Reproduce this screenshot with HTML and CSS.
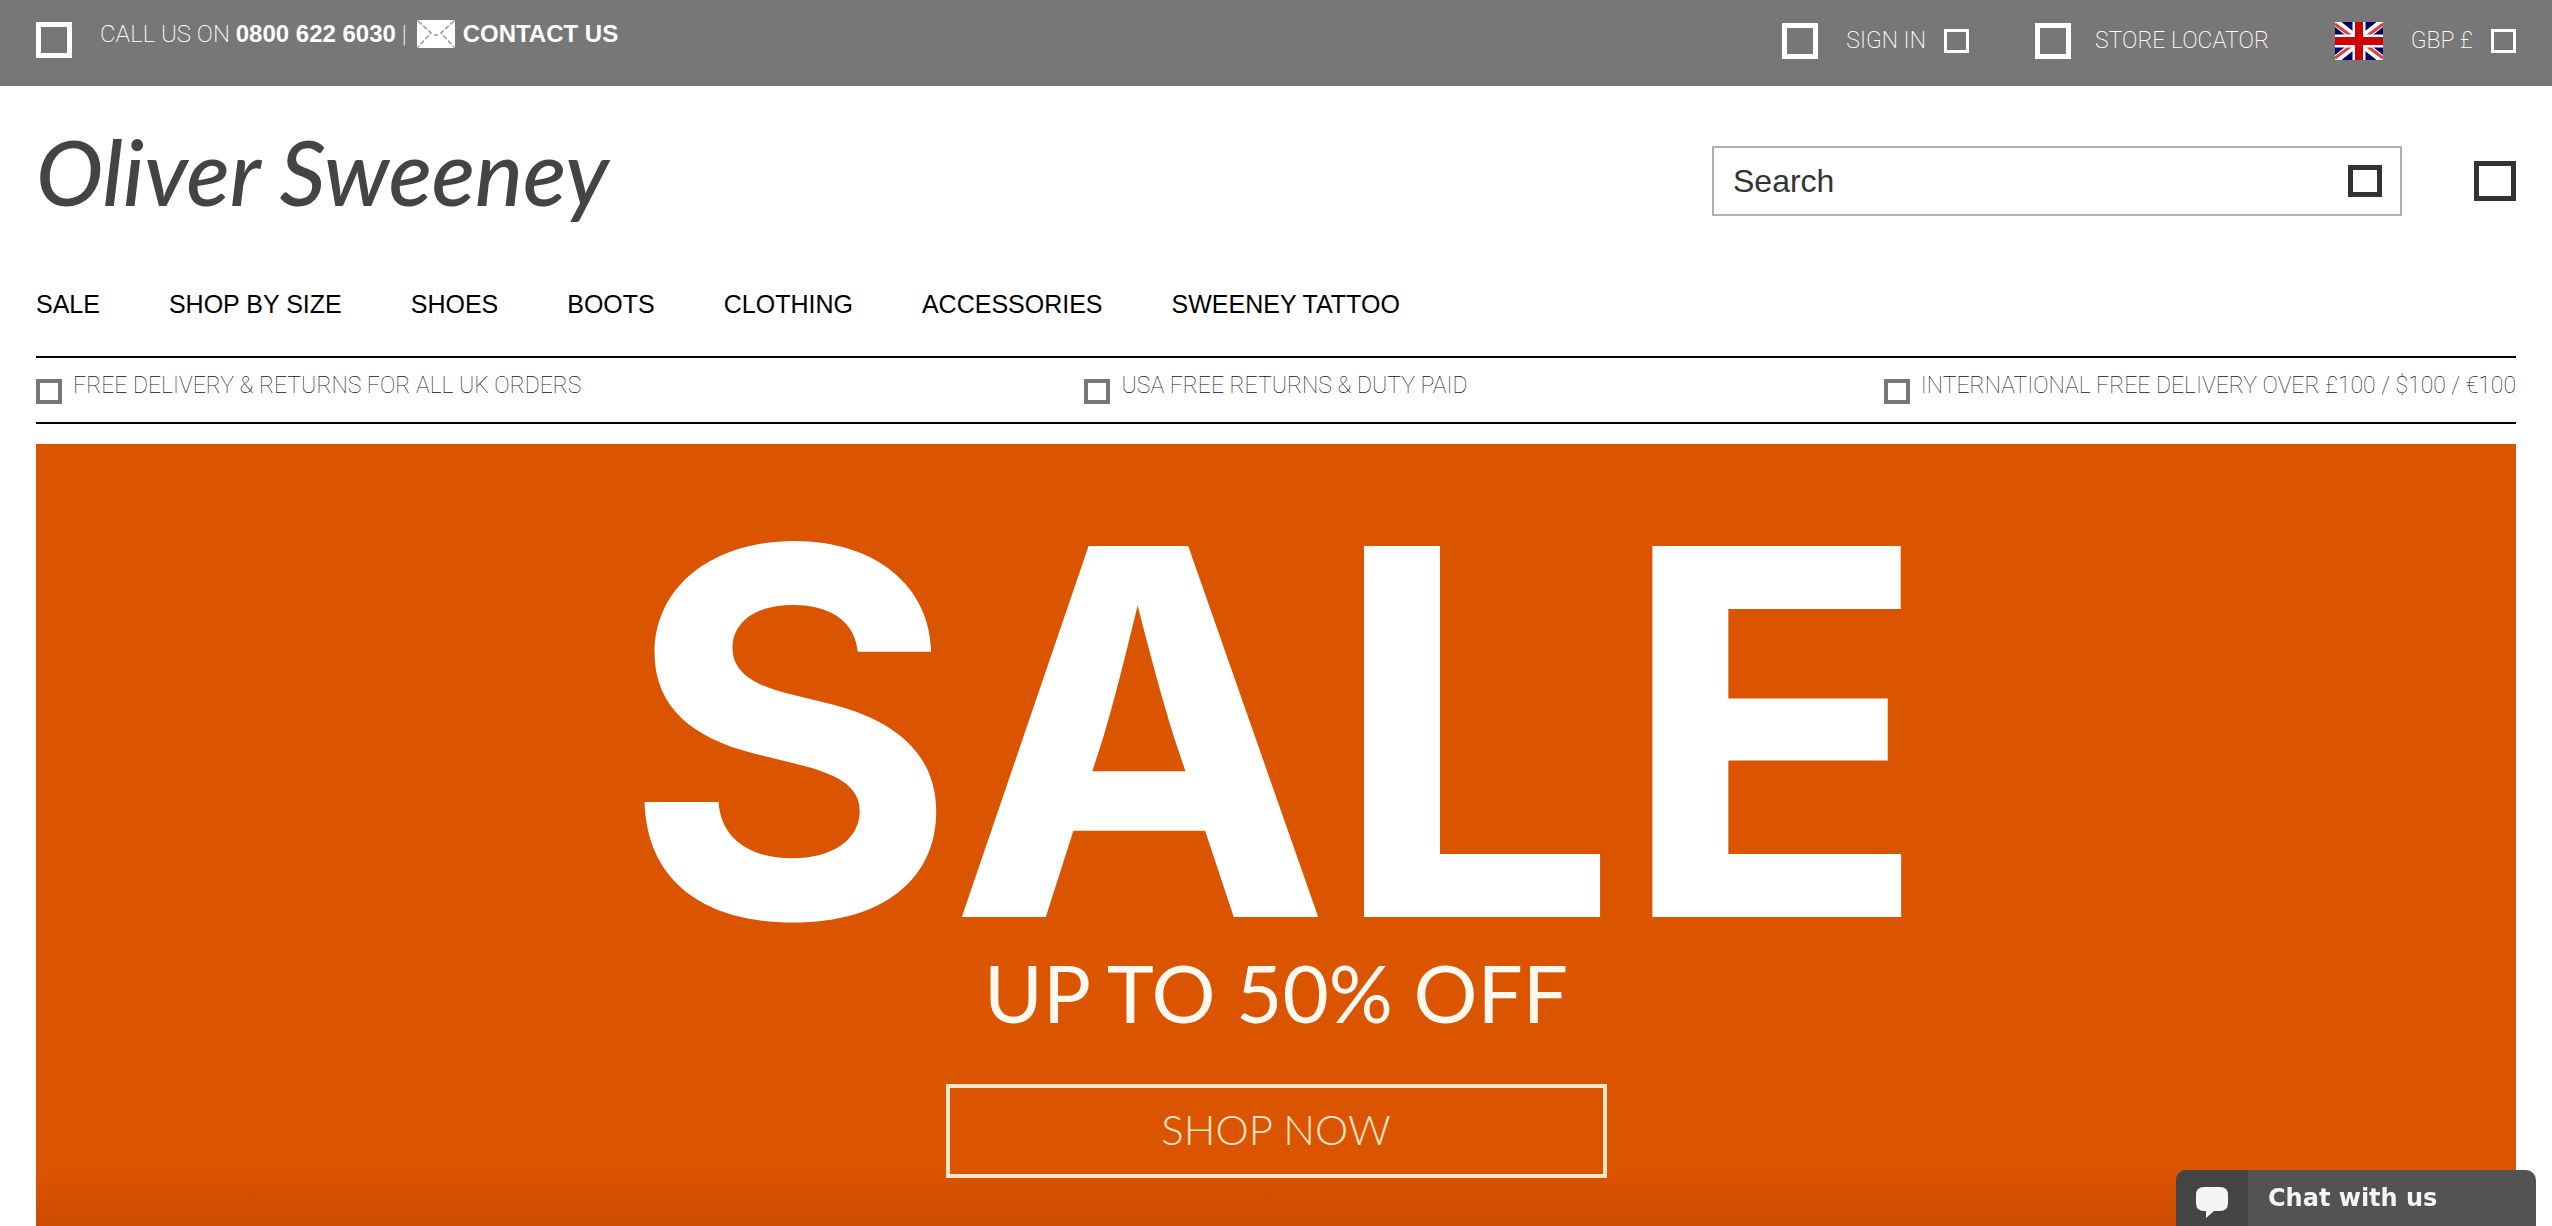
FILE: index.html
```
<!DOCTYPE html>
<html lang="en">
<head>
  <meta charset="utf-8">
  <meta name="viewport" content="width=device-width, initial-scale=1">
  <title>Oliver Sweeney</title>
  <link rel="stylesheet" href="styles.css">
</head>

<body>
  <div id="top-bar">
    <div class="contact">
      <span class="icon icon-large"></span>
      <p>CALL US ON <a href="tel:08006226030">0800 622 6030</a> |</p>
      <a class="mail" href="#contact">
        <svg width="38" height="28" viewBox="0 0 38 28">
          <rect width="38" height="28" rx="2" fill="#fff"/>
          <path d="M1 1l13 12L1 27M37 1L24 13l13 14M17 15h4" fill="none" stroke="#999" stroke-width="1.5" stroke-dasharray="5 2"/>
        </svg>
        CONTACT US
      </a>
    </div>
    <div class="account">
      <button type="button" class="sign-in"><span class="icon icon-large"></span>SIGN IN<span class="icon icon-small"></span></button>
      <a class="stores" href="#stores"><span class="icon icon-large"></span>STORE LOCATOR</a>
      <button type="button" class="currency">
        <svg width="48" height="38" viewBox="0 0 48 38">
          <rect width="48" height="38" fill="#006"/>
          <path d="M0 0l48 38M48 0L0 38" stroke="#fff" stroke-width="8"/>
          <path d="M0 2l20 15M48 2L28 17M0 36l20-15M48 36L28 21" stroke="#e0403c" stroke-width="3"/>
          <path d="M24 0v38M0 19h48" stroke="#fff" stroke-width="13"/>
          <path d="M24 0v38M0 19h48" stroke="#d00000" stroke-width="8"/>
        </svg>
        GBP £<span class="icon icon-small"></span>
      </button>
    </div>
  </div>

  <header>
    <a class="logo" href="#home">
      <svg width="576" height="130" viewBox="0 0 576 130">
        <text x="0" y="90">Oliver Sweeney</text>
      </svg>
    </a>
    <form class="search">
      <input type="text" placeholder="Search" aria-label="Search">
      <button type="submit" aria-label="Go"><span class="icon icon-search"></span></button>
    </form>
    <a class="bag" href="#bag" aria-label="Bag"><span class="icon icon-bag"></span></a>
  </header>

  <nav>
    <a href="#sale">SALE</a>
    <a href="#size">SHOP BY SIZE</a>
    <a href="#shoes">SHOES</a>
    <a href="#boots">BOOTS</a>
    <a href="#clothing">CLOTHING</a>
    <a href="#accessories">ACCESSORIES</a>
    <a href="#tattoo">SWEENEY TATTOO</a>
  </nav>

  <ul id="delivery">
    <li><span class="icon icon-tick"></span>FREE DELIVERY &amp; RETURNS FOR ALL UK ORDERS</li>
    <li><span class="icon icon-tick"></span>USA FREE RETURNS &amp; DUTY PAID</li>
    <li><span class="icon icon-tick"></span>INTERNATIONAL FREE DELIVERY OVER £100 / $100 / €100</li>
  </ul>

  <main id="banner">
    <h1>SALE</h1>
    <h2>UP TO 50% OFF</h2>
    <a class="shop-now" href="#sale">SHOP NOW</a>
  </main>

  <button type="button" id="chat">
    <span class="bubble">
      <svg width="32" height="31" viewBox="0 0 32 31">
        <path d="M8 0h16q8 0 8 8v8q0 8-8 8h-6l-8 7v-7H8q-8 0-8-8V8q0-8 8-8z" fill="#f5f5f5"/>
      </svg>
    </span>
    <span class="chat-text">Chat with us</span>
  </button>
</body>
</html>
```
FILE: styles.css
```
* {
  box-sizing: border-box;
}

body {
  margin: 0;
  min-height: 100vh;
  display: flex;
  flex-direction: column;
  background: #fff;
  font-family: "Liberation Sans", Arial, sans-serif;
}

a {
  color: inherit;
  text-decoration: none;
}

button {
  padding: 0;
  border: 0;
  background: none;
  color: inherit;
  font: inherit;
  cursor: pointer;
}

/* Empty square icons */
.icon {
  display: block;
  flex: none;
  border: 5px solid currentColor;
}

.icon-large {
  width: 36px;
  height: 36px;
}

.icon-small {
  width: 25px;
  height: 24px;
  border-width: 3px;
}

.icon-search {
  width: 34px;
  height: 32px;
}

.icon-bag {
  width: 42px;
  height: 40px;
}

.icon-tick {
  width: 26px;
  height: 25px;
  margin-top: 8px;
  border-width: 4px;
  border-color: #777;
}

/* Top bar */
#top-bar {
  display: flex;
  justify-content: space-between;
  height: 86px;
  padding: 20px 36px 0;
  background: #777;
  color: #fff;
  font: 200 24px/28px Roboto, sans-serif;
}

#top-bar p {
  margin: 0;
}

.contact,
.mail {
  display: flex;
  align-items: flex-start;
}

.contact .icon {
  margin: 2px 28px 0 0;
}

.contact a {
  font-family: "Liberation Sans", Arial, sans-serif;
  font-weight: bold;
}

.mail {
  gap: 8px;
  margin-left: 10px;
}

.account {
  display: flex;
  gap: 66px;
  height: 42px;
  font-size: 23px;
}

.account > * {
  display: flex;
  align-items: center;
}

.sign-in,
.currency {
  gap: 18px;
}

.sign-in .icon-large,
.currency svg {
  margin-right: 10px;
}

.stores {
  gap: 24px;
}

/* Logo and search */
header {
  display: flex;
  align-items: center;
  padding: 30px 36px 0;
}

.logo {
  margin-right: auto;
}

.logo svg {
  display: block;
  overflow: visible;
}

.logo text {
  fill: #444;
  font: italic 500 90px Lato, sans-serif;
}

.search {
  display: flex;
  align-items: center;
  width: 690px;
  height: 70px;
  padding: 0 18px 0 19px;
  border: 2px solid #b0b0b0;
  color: #333;
}

.search input {
  flex: 1;
  min-width: 0;
  padding: 0;
  border: 0;
  outline: 0;
  background: none;
  font: 32px "Liberation Sans", Arial, sans-serif;
}

.search input::placeholder {
  color: #333;
  opacity: 1;
}

.bag {
  margin-left: 72px;
  color: #333;
}

nav {
  display: flex;
  gap: 69px;
  padding: 43px 36px 37px;
  color: #000;
  font-size: 25px;
  line-height: 30px;
}

/* Delivery strip */
#delivery {
  display: grid;
  grid-template-columns: repeat(3, 1fr);
  height: 68px;
  margin: 0 36px 20px;
  padding: 13px 0 0;
  border-top: 2px solid #000;
  border-bottom: 2px solid #000;
  list-style: none;
  color: #111;
  font: 100 23px/30px Roboto, sans-serif;
}

#delivery li {
  display: flex;
  gap: 11px;
  white-space: nowrap;
}

#delivery li:nth-child(2) {
  justify-content: center;
}

#delivery li:nth-child(3) {
  justify-content: flex-end;
}

/* Banner */
#banner {
  flex: 1;
  display: flex;
  flex-direction: column;
  align-items: center;
  margin: 0 36px;
  padding: 68px 0 48px;
  background: linear-gradient(to top, #cc4c00, #db5400 56px);
  color: #fff;
}

#banner h1 {
  margin: 0;
  font: 700 510px/440px Inter, sans-serif;
}

#banner h2 {
  margin: 0 0 52px;
  color: #fff9ef;
  font: 400 80px/80px Lato, sans-serif;
}

.shop-now {
  width: 661px;
  height: 94px;
  border: 4px solid #ffe6c8;
  color: #ffe6c8;
  font: 300 42px/82px Lato, sans-serif;
  text-align: center;
}

/* Chat tab */
#chat {
  position: fixed;
  right: 16px;
  bottom: 0;
  display: flex;
  width: 360px;
  height: 56px;
  overflow: hidden;
  border-radius: 10px 10px 0 0;
  background: #535353;
  color: #f5f5f5;
  font: bold 24px/56px "DejaVu Sans", Verdana, sans-serif;
}

.bubble {
  display: flex;
  align-items: center;
  justify-content: center;
  width: 72px;
  height: 64px;
  background: #454545;
}

.chat-text {
  padding-left: 20px;
}
```
